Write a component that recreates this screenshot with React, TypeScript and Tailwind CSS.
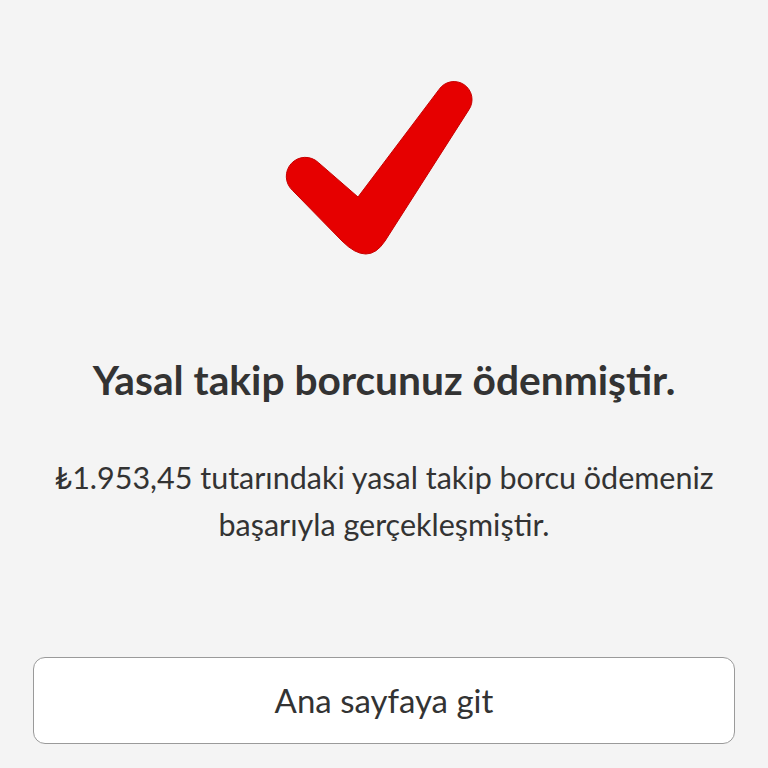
export default function App() {
  return (
    <div
      className="w-[768px] h-[768px] bg-[#f4f4f4] flex flex-col items-center text-[#333] overflow-hidden"
      style={{ fontFamily: "Lato, 'Open Sans', sans-serif" }}
    >
      <svg
        className="mt-[75px] shrink-0"
        width="240"
        height="200"
        viewBox="264 75 240 200"
      >
        <path
          d="M358 197 L318.2 162.4 A19 19 0 0 0 292.4 190.3 L342 241 Q368 267 385 241 L468.9 109.7 A18 18 0 0 0 439.1 89.4 Z"
          fill="#e60000"
          stroke="#c80000"
          strokeWidth="1"
          strokeLinejoin="round"
        />
      </svg>
      <h1 className="mt-[81px] text-[40.7px] leading-[48px] font-bold">
        Yasal takip borcunuz ödenmiştir.
      </h1>
      <p className="mt-[50px] text-[30.5px] leading-[47px] text-center">
        ₺1.953,45 tutarındaki yasal takip borcu ödemeniz
        <br />
        başarıyla gerçekleşmiştir.
      </p>
      <button className="mt-[109px] w-[702px] h-[87px] bg-white border-[1.5px] border-[#9a9a9a] rounded-[12px] text-[33px] text-[#333] flex items-center justify-center">
        Ana sayfaya git
      </button>
    </div>
  );
}
